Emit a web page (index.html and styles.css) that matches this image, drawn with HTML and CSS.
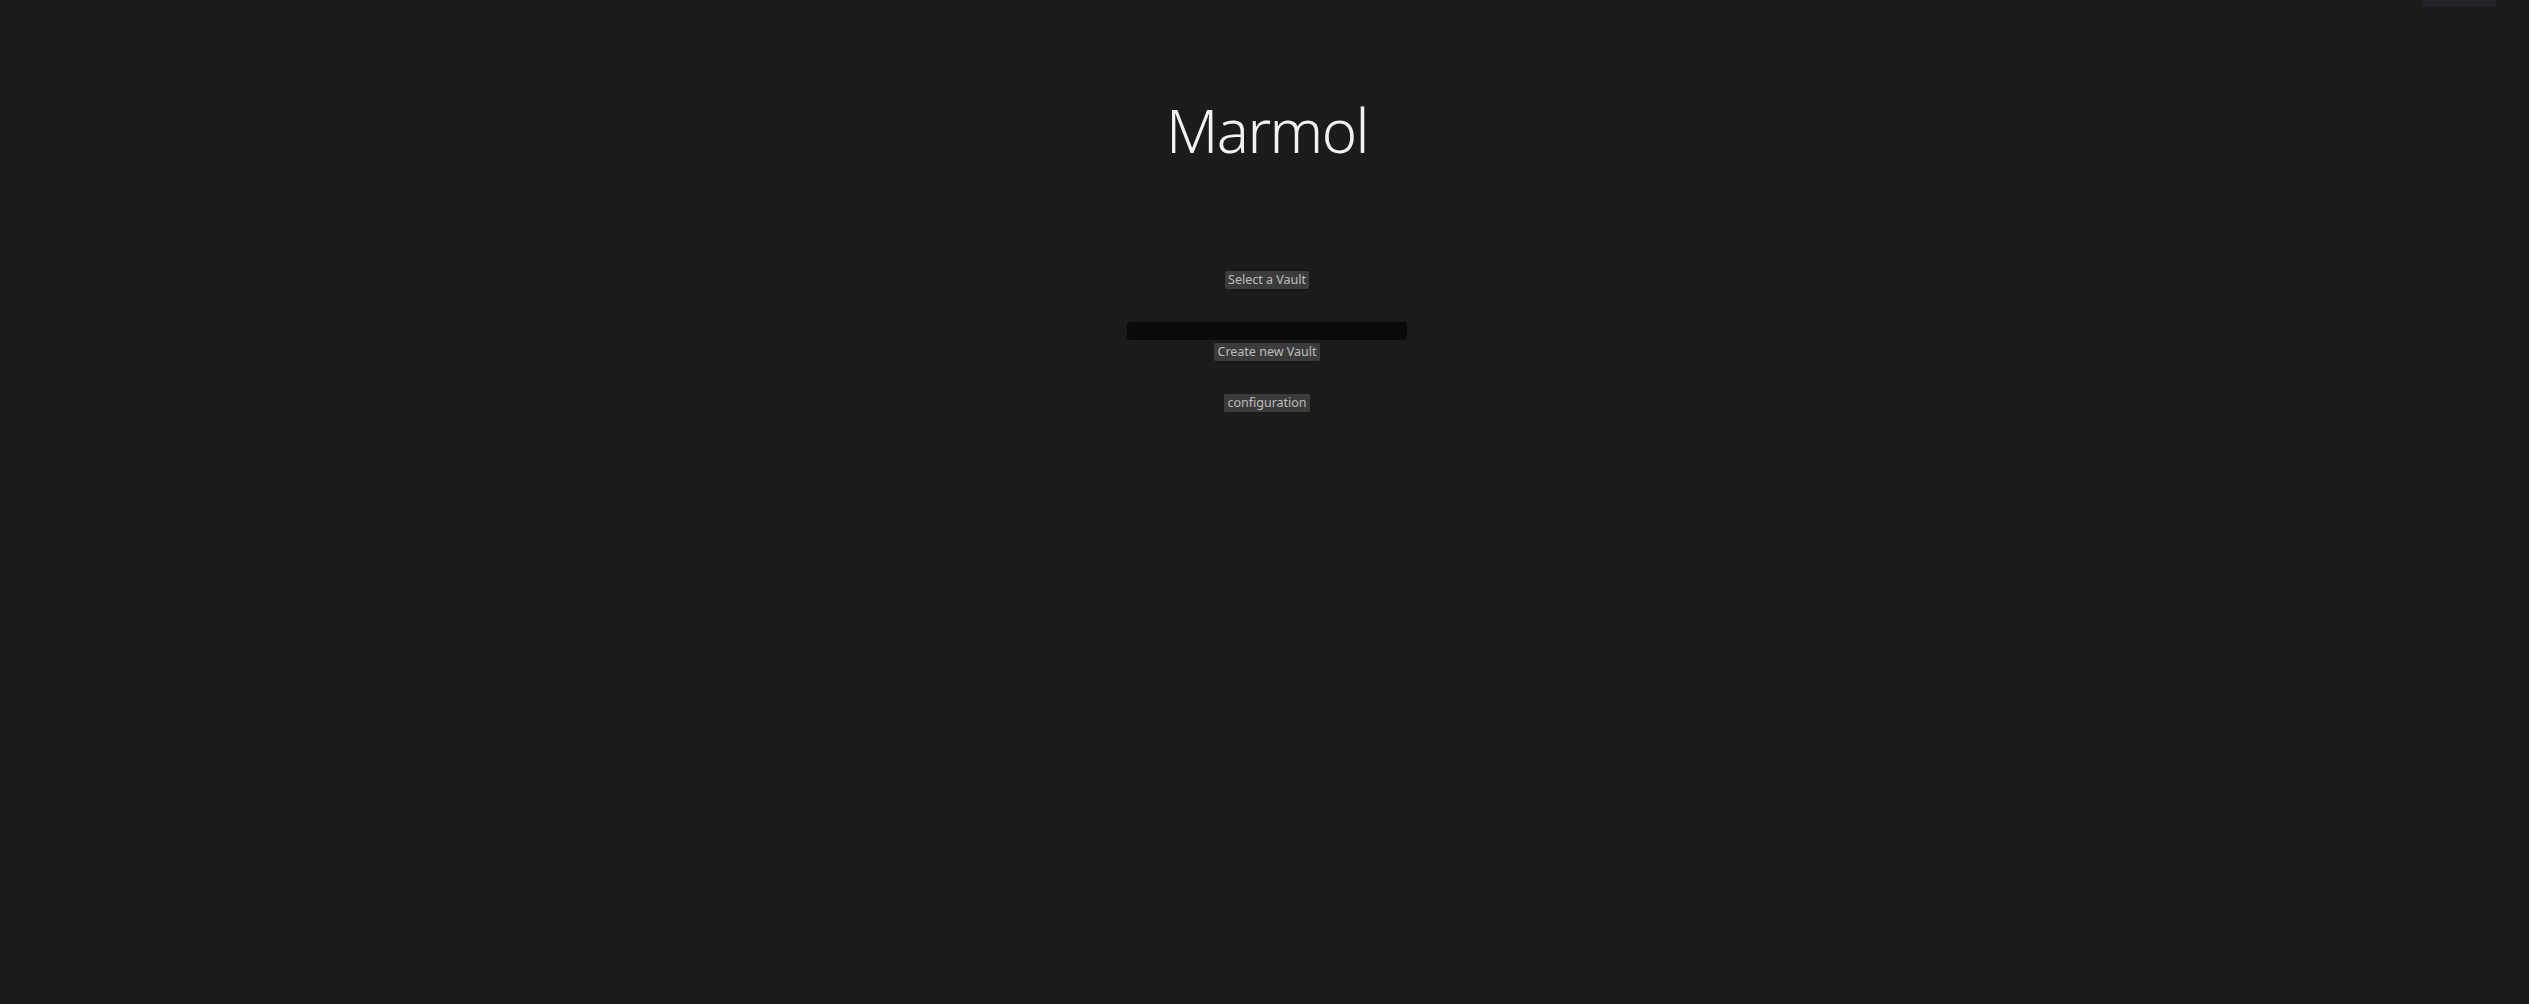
FILE: index.html
```html
<!DOCTYPE html>
<html>
<head>
<meta charset="utf-8">
<title>Marmol</title>
<link rel="stylesheet" href="styles.css">
</head>
<body>
<div class="toast"></div>
<main class="start">
  <h1 class="title">Marmol</h1>
  <button class="btn btn-select">Select a Vault</button>
  <div class="create-group">
    <input class="vault-input" type="text">
    <button class="btn">Create new Vault</button>
  </div>
  <button class="btn btn-config">configuration</button>
</main>
</body>
</html>
```

FILE: styles.css
```css
html, body {
  margin: 0;
  padding: 0;
  background: #1b1b1b;
  height: 100%;
}
body {
  font-family: "Noto Sans", "Open Sans", sans-serif;
  color: #c4c4c4;
  position: relative;
  overflow: hidden;
}
.toast {
  position: absolute;
  top: 0;
  left: 2423px;
  width: 73px;
  height: 7px;
  background: #222328;
  border-radius: 0 0 2px 2px;
}
.start {
  display: flex;
  flex-direction: column;
  align-items: center;
  padding-top: 100px;
  padding-left: 5px;
}
.title {
  margin: 0;
  font-size: 60px;
  font-weight: 300;
  line-height: 60px;
  color: #f2f2f2;
  letter-spacing: -1.5px;
}
.btn {
  height: 18px;
  padding: 0 3px;
  border: none;
  border-radius: 2px;
  background: #3b3b3b;
  color: #bdbdbd;
  font-family: inherit;
  font-size: 12.5px;
  line-height: 18px;
}
.btn-select {
  margin-top: 111px;
}
.create-group {
  margin-top: 33px;
  display: flex;
  flex-direction: column;
  align-items: center;
  gap: 3px;
}
.vault-input {
  width: 280px;
  height: 18px;
  box-sizing: border-box;
  border: none;
  border-radius: 3px;
  background: #0a0a0a;
  padding: 0 4px;
  color: #ddd;
  outline: none;
}
.btn-config {
  margin-top: 33px;
}
```
